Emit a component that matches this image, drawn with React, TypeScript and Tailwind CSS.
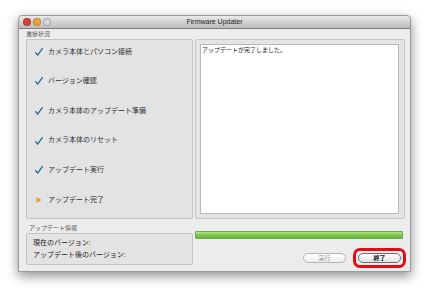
import React from "react";

const steps = [
  { label: "カメラ本体とパソコン接続", done: true },
  { label: "バージョン確認", done: true },
  { label: "カメラ本体のアップデート準備", done: true },
  { label: "カメラ本体のリセット", done: true },
  { label: "アップデート実行", done: true },
  { label: "アップデート完了", done: false },
];

const font = {
  fontFamily: '"Liberation Sans", "Noto Sans CJK JP", sans-serif',
};

function Check() {
  return (
    <svg width="8" height="8" viewBox="0 0 8 8" className="shrink-0">
      <path
        d="M0.8 4.6 L2.6 7.2 L7.4 0.6"
        fill="none"
        stroke="#1f6a96"
        strokeWidth="1.3"
        strokeLinecap="round"
        strokeLinejoin="round"
      />
    </svg>
  );
}

function Arrow() {
  return (
    <svg width="8" height="8" viewBox="0 0 8 8" className="shrink-0">
      <path d="M1.5 1 L6.5 4 L1.5 7 Z" fill="#ef9a2a" />
    </svg>
  );
}

function Light({ color }: { color: string }) {
  return (
    <span
      className={`w-[8px] h-[8px] rounded-full border border-black/20 ${color}`}
    />
  );
}

export default function App() {
  return (
    <div className="w-[430px] h-[296px] bg-white pt-[15px] pl-[18px]" style={font}>
      <div className="w-[393px] h-[257px] flex flex-col bg-[#ececec] rounded-t-[4px] shadow-[0_4px_12px_rgba(0,0,0,0.45)] border border-[#9a9a9a]">
        {/* title bar */}
        <div className="relative h-[13px] shrink-0 flex items-center px-[4px] gap-[2px] rounded-t-[4px] bg-gradient-to-b from-[#e9e9e9] to-[#bdbdbd] border-b border-[#7f7f7f]">
          <Light color="bg-[#d8413c]" />
          <Light color="bg-[#f0a33a]" />
          <Light color="bg-[#d6d6d6]" />
          <span className="absolute inset-0 flex items-center justify-center text-[7px] text-[#222]">
            Firmware Updater
          </span>
        </div>

        <div className="flex-1 flex flex-col pl-[7px] pr-[5px]">
          <div className="h-[10px] pt-[2px] text-[6px] leading-[7px] text-[#555]">進捗状況</div>
          <div className="flex gap-[2px] h-[180px]">
            <div className="w-[167px] h-full bg-[#e3e3e3] border border-[#c4c4c4] rounded-[2px] flex flex-col">
              {steps.map((s) => (
                <div
                  key={s.label}
                  className="h-[29.6px] shrink-0 flex items-center gap-[5px] pl-[8px] text-[7px] text-[#2e2e2e] first:mt-[-3px]"
                >
                  {s.done ? <Check /> : <Arrow />}
                  <span>{s.label}</span>
                </div>
              ))}
            </div>
            <div className="w-[210px] h-full bg-[#e4e4e4] border border-[#c6c6c6] rounded-[2px] p-[4px] pr-[5px]">
              <div className="w-full h-full bg-white border border-[#b8b8b8] px-[1px] pt-[1px] text-[6px] leading-[8px] text-[#222]">
                アップデートが完了しました。
              </div>
            </div>
          </div>

          <div className="flex gap-[2px] mt-[3px]">
            <div className="w-[167px] flex flex-col">
              <div className="h-[11px] pl-[3px] pt-[3px] text-[6px] leading-[7px] text-[#555]">アップデート情報</div>
              <div className="h-[32px] bg-[#e3e3e3] border border-[#c4c4c4] rounded-[2px] pl-[6px] pt-[5px] flex flex-col gap-[4px] text-[7px] leading-[8px] text-[#222]">
                <span>現在のバージョン:</span>
                <span>アップデート後のバージョン:</span>
              </div>
            </div>
            <div className="w-[210px] flex flex-col pt-[9px]">
              <div className="w-[208px] h-[8px] rounded-[1px] border border-[#6ea944] bg-gradient-to-b from-[#b9e58e] via-[#7cc84a] to-[#68b53a]" />
              <div className="flex justify-end items-center gap-[7px] mt-[9px] pr-[3px]">
                <div className="w-[43px] h-[10px] rounded-full border border-[#b5b5b5] bg-gradient-to-b from-white to-[#ececec] flex items-center justify-center text-[6px] text-[#9a9a9a]">
                  実行
                </div>
                <div className="rounded-[7px] border-[3px] border-[#e20d14] p-[2px] mr-[-4px]">
                  <div className="w-[43px] h-[10px] rounded-full border border-[#707070] bg-gradient-to-b from-white to-[#e2e2e2] flex items-center justify-center text-[6px] font-bold text-[#111]">
                    終了
                  </div>
                </div>
              </div>
            </div>
          </div>
        </div>
      </div>
    </div>
  );
}
